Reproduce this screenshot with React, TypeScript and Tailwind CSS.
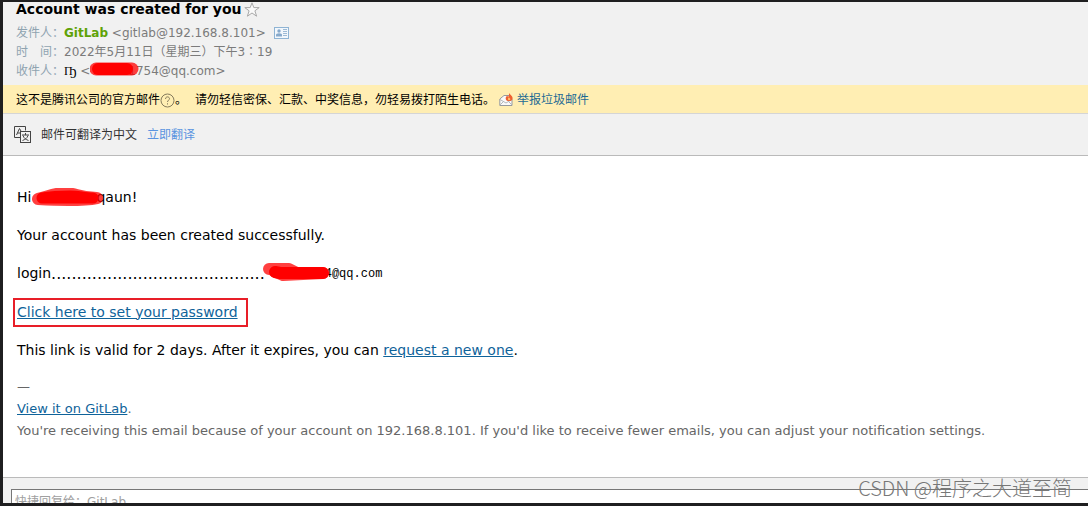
import type { ReactNode } from "react";

interface MetaRowProps {
  label: string;
  children: ReactNode;
}

function MetaRow({ label, children }: MetaRowProps) {
  return (
    <div className="flex h-[19px] items-center whitespace-pre">
      <span className="w-12 shrink-0 text-[#8fa3b0]">{label}</span>
      {children}
    </div>
  );
}

function StarIcon() {
  return (
    <svg width="16" height="16" viewBox="0 0 16 16" fill="#fafafa" stroke="#a8a8a8">
      <path d="M8 .8 9.800 5.600h5.400l-4.300 3.200 1.700 5.400L8 11l-4.600 3.200 1.700-5.400L.8 5.600h5.400z" />
    </svg>
  );
}

function ContactCardIcon() {
  return (
    <svg width="15" height="12" viewBox="0 0 15 12" fill="none">
      <rect x=".5" y=".5" width="14" height="11" fill="#f2f7fc" stroke="#8fb4d4" />
      <circle cx="5" cy="4" r="1.700" fill="#86a9cb" />
      <path d="M2 9.500V8c0-1 1-1.700 3-1.700S8 7 8 8v1.500z" fill="#86a9cb" />
      <path d="M9 2.500h4M9 4.500h4M9 6.500h4M9 8.500h4" stroke="#9dbad5" />
    </svg>
  );
}

function HelpIcon() {
  return (
    <svg width="15" height="15" viewBox="0 0 15 15" fill="none" stroke="#857b5c">
      <circle cx="7.500" cy="7.500" r="6.500" />
      <path d="M5.500 6c0-3 4-2.600 4-.3C9.500 7.200 7.500 7.200 7.500 9M7.500 10.300v1.200" />
    </svg>
  );
}

function SpamIcon() {
  return (
    <svg width="14" height="14" viewBox="0 0 14 14" fill="none">
      <path d="M.8 6 5 2.500h5L13 6v6.500H.8z" fill="#fafafa" stroke="#969a9e" />
      <path d="m1 12 4-4M13 12 9 8M1 6.500l6 3.500 6-3.500" stroke="#b4b8bc" />
      <path d="M9 8C5.500 7 6.500 3.500 8.500 2.500c0 0 0 1 .6 1.200C10.500 3 9.500 1 10.600 0c0 2 3 2.500 3 5.200 0 2.200-2.200 3.200-4.600 2.800z" fill="#ee6030" />
      <path d="M9.800 7.300c-1.300-.5-1-2.300.2-3 0 1 1.600 1 1.300 2.200-.2.600-.8.900-1.500.8z" fill="#ffc36b" />
    </svg>
  );
}

function TranslateIcon() {
  return (
    <svg width="17" height="17" viewBox="0 0 17 17" fill="none" stroke="#444">
      <path d="M6.500 11.500h-6V.5h11v4" />
      <path d="m2.500 9 3-6.500L7.500 6M3.500 7h3" />
      <rect x="6.500" y="5.500" width="10" height="11" fill="#f1f1f1" />
      <path d="M11.500 7v2M8 9h7M9 9.500c1 3 3 4 5.500 5M14 9.500c-1 3-3 4-5.500 5" />
    </svg>
  );
}

export default function App() {
  return (
    <div className="relative flex h-screen flex-col overflow-hidden border-t-2 border-b-3 border-l-3 border-[#1f1f20] bg-white font-['DejaVu_Sans','Noto_Sans_CJK_SC',sans-serif] text-sm text-black">
      <header className="h-[83px] shrink-0 bg-[#f1f1f1] px-[13px] text-xs text-[#7b7b7b]">
        <div className="flex h-[21px] items-start gap-[2px]">
          <h1 className="text-sm leading-[15px] font-bold text-black">Account was created for you</h1>
          <StarIcon />
        </div>
        <MetaRow label="发件人：">
          <b className="text-[#5fa207]">GitLab</b>
          <span className="mr-2"> &lt;gitlab@192.168.8.101&gt;</span>
          <ContactCardIcon />
        </MetaRow>
        <MetaRow label="时　间：">
          <time dateTime="2022-05-11T15:19">
            2022年5月11日（星期三）下午3<span className="font-['Noto_Sans_CJK_TC',sans-serif]" lang="zh-TW">：</span>19
          </time>
        </MetaRow>
        <MetaRow label="收件人：">
          <span className="font-['Liberation_Serif','DejaVu_Serif',serif] text-xs text-black">Ҧ</span>
          <span> &lt;</span>
          <svg className="relative -mr-3 shrink-0" width="50" height="18" viewBox="0 0 50 18" fill="none" strokeLinecap="round">
            <path d="M6 7h36" stroke="#ff0000" strokeOpacity=".75" strokeWidth="13" />
            <path d="M8 7h29" stroke="#ff0000" strokeWidth="12" />
          </svg>
          <span>1754@qq.com&gt;</span>
        </MetaRow>
      </header>

      <div className="flex h-[29px] shrink-0 items-center border-b border-[#d5d5d5] bg-[#ffeeb3] px-[13px] pt-[2px] text-xs">
        <span>这不是腾讯公司的官方邮件</span>
        <HelpIcon />
        <span className="mr-2">。</span>
        <span>请勿轻信密保、汇款、中奖信息，勿轻易拨打陌生电话。</span>
        <a href="#report" className="ml-1 flex items-center gap-1 text-[#1e6a94]">
          <SpamIcon />
          举报垃圾邮件
        </a>
      </div>

      <div className="flex h-[42px] shrink-0 items-center gap-[10px] border-b border-[#bababa] bg-[#f1f1f1] px-[11px] text-xs text-[#333]">
        <TranslateIcon />
        <span>邮件可翻译为中文</span>
        <button type="button" className="text-[#5a94e0]">
          立即翻译
        </button>
      </div>

      <main className="h-[321px] shrink-0 px-[14px] pt-8 leading-[19px]">
        <p className="mb-[19px] flex h-[19px] items-center">
          Hi
          <svg className="relative -mr-2 shrink-0" width="73" height="20" viewBox="0 0 73 20" fill="none" strokeLinecap="round" strokeLinejoin="round">
            <path d="M7 11c10-2 16-6 27-6 10 0 15 5 32 5-15 3-40 2-59 1" stroke="#ff0000" strokeOpacity=".75" strokeWidth="12" />
            <path d="M11 10c12-2 20-2 28-2s15 2 23 2H11" stroke="#ff0000" strokeWidth="11" />
          </svg>
          qaun!
        </p>
        <p className="mb-[19px]">Your account has been created successfully.</p>
        <p className="mb-[19px] flex h-[19px] items-center">
          login<span className="text-base leading-[19px]">..........................................</span>
          <svg className="relative -mt-1 -ml-[2px] -mr-[6px] shrink-0" width="68" height="18" viewBox="0 0 68 18" fill="none" strokeLinecap="round" strokeLinejoin="round">
            <path d="M6 6h20l8 4h26l-40 2-9-4" stroke="#ff0000" strokeOpacity=".75" strokeWidth="12" />
            <path d="M12 9l5 1h43" stroke="#ff0000" strokeWidth="12" />
          </svg>
          <span className="font-['Liberation_Mono',monospace] text-xs">4@qq.com</span>
        </p>
        <p className="mb-[19px] flex h-5 items-center">
          <a href="#password" className="-ml-1 border-2 border-[#e81e28] py-[3px] pr-2 pl-[2px] text-[#0f639a] underline">
            Click here to set your password
          </a>
        </p>
        <p>
          This link is valid for 2 days. After it expires, you can{" "}
          <a href="#request" className="text-[#0f639a] underline">
            request a new one
          </a>
          .
        </p>
        <footer className="mt-4 text-[13px] leading-[22px] text-[#666]">
          <p>—</p>
          <p>
            <a href="#gitlab" className="text-[#0f639a] underline">
              View it on GitLab
            </a>
            .
          </p>
          <p>
            You're receiving this email because of your account on 192.168.8.101. If you'd like to receive fewer emails, you
            can adjust your notification settings.
          </p>
        </footer>
      </main>

      <div className="min-h-0 flex-1 border-t border-[#bababa] bg-[#f1f1f1] pt-[11px] pl-2">
        <input
          type="text"
          aria-label="快捷回复"
          placeholder="快捷回复给：GitLab"
          className="block h-7 w-full border-t border-l border-[#777] bg-white px-[3px] pb-1 text-xs placeholder:text-[#a0a0a0]"
        />
      </div>

      <div className="pointer-events-none absolute right-4 bottom-0 font-['Noto_Sans_CJK_SC',sans-serif] text-xl leading-[30px] font-light text-[#777]">
        CSDN @程序之大道至简
      </div>
    </div>
  );
}
